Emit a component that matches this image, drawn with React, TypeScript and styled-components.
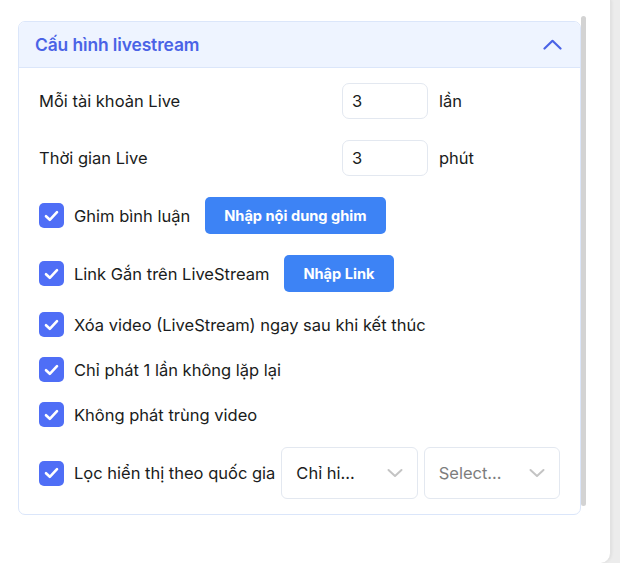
import React from "react";
import styled, { createGlobalStyle } from "styled-components";

const Global = createGlobalStyle`
  html, body { margin: 0; padding: 0; background: #ececec; }
  body { font-family: Inter, "Noto Sans", "Liberation Sans", sans-serif; color: #1a1c20; }
  * { box-sizing: border-box; }
`;

const Panel = styled.div`
  width: 611px;
  height: 563px;
  background: #ffffff;
  border-bottom-right-radius: 10px;
  border-right: 1px solid #e2e2e2;
  box-shadow: 1px 0 3px rgba(0, 0, 0, 0.06);
  display: flex;
  align-items: flex-start;
  padding-left: 18px;
`;

const Column = styled.div`
  padding-top: 21px;
  width: 563px;
`;

const ScrollThumb = styled.div`
  width: 5px;
  height: 490px;
  margin-top: 16px;
  border-radius: 3px;
  background: #d3d3d3;
`;

const Card = styled.section`
  border: 1px solid #dbe6fa;
  border-radius: 7px;
  overflow: hidden;
  background: #fff;
`;

const Header = styled.div`
  height: 46px;
  background: #eef4ff;
  border-bottom: 1px solid #dbe6fa;
  display: flex;
  align-items: center;
  justify-content: space-between;
  padding: 0 18px 0 16px;
`;

const Title = styled.h3`
  margin: 0;
  font-size: 17.4px;
  font-weight: 600;
  color: #4a63e6;
  letter-spacing: -0.1px;
`;

const Body = styled.div`
  padding: 15px 20px 15px 20px;
  display: flex;
  flex-direction: column;
  gap: 20px;
`;

const FieldRow = styled.div`
  display: flex;
  align-items: center;
  height: 36px;
  margin-bottom: 1px;
`;

const FieldLabel = styled.span`
  width: 303px;
  font-size: 16.5px;
`;

const NumInput = styled.input`
  width: 86px;
  height: 36px;
  border: 1px solid #e3e8f0;
  border-radius: 7px;
  padding: 0 9px;
  font-family: inherit;
  font-size: 16.5px;
  color: #1a1c20;
  outline: none;
`;

const Unit = styled.span`
  margin-left: 11px;
  font-size: 16.5px;
`;

const CheckRow = styled.div<{ $spaced?: boolean }>`
  display: flex;
  align-items: center;
  min-height: 25px;
  margin-bottom: ${(p) => (p.$spaced ? "1px" : "0")};
`;

const Box = styled.span`
  width: 25px;
  height: 25px;
  border-radius: 5px;
  background: #4f6ef6;
  display: inline-flex;
  align-items: center;
  justify-content: center;
  flex: none;
`;

const CheckLabel = styled.span`
  margin-left: 10px;
  font-size: 16.5px;
  line-height: 20px;
  white-space: nowrap;
`;

const ActionButton = styled.button`
  margin-left: 15px;
  height: 37px;
  padding: 0 19px;
  border: none;
  border-radius: 5px;
  background: #3d83f5;
  color: #fff;
  font-family: inherit;
  font-size: 14.6px;
  font-weight: 700;
  cursor: pointer;
`;

const Selects = styled.div`
  flex: 1;
  display: flex;
  gap: 6px;
  margin-left: 6px;
`;

const SelectBox = styled.div<{ $placeholder?: boolean }>`
  flex: 1;
  height: 52px;
  border: 1px solid #e3e8f0;
  border-radius: 6px;
  display: flex;
  align-items: center;
  justify-content: space-between;
  padding: 0 14px 0 14px;
  font-size: 16.5px;
  color: ${(p) => (p.$placeholder ? "#7d7d7d" : "#1a1c20")};
`;

const Check = () => (
  <svg width="15" height="12" viewBox="0 0 15 12" fill="none">
    <path d="M2 6.2 L5.8 9.8 L13 2.2" stroke="#fff" strokeWidth="2.6" strokeLinecap="round" strokeLinejoin="round" />
  </svg>
);

const ChevronUp = () => (
  <svg width="19" height="11" viewBox="0 0 19 11" fill="none">
    <path d="M1.5 9.5 L9.5 1.8 L17.5 9.5" stroke="#4a63e6" strokeWidth="2.2" strokeLinecap="round" strokeLinejoin="round" />
  </svg>
);

const ChevronDown = () => (
  <svg width="16" height="10" viewBox="0 0 16 10" fill="none">
    <path d="M1.5 2 L8 8 L14.5 2" stroke="#c4c4c4" strokeWidth="2" strokeLinecap="round" strokeLinejoin="round" />
  </svg>
);

const CheckItem = ({
  label,
  spaced,
  children,
}: {
  label: string;
  spaced?: boolean;
  children?: React.ReactNode;
}) => (
  <CheckRow $spaced={spaced}>
    <Box>
      <Check />
    </Box>
    <CheckLabel>{label}</CheckLabel>
    {children}
  </CheckRow>
);

export default function App() {
  return (
    <>
      <Global />
      <Panel>
        <Column>
          <Card>
            <Header>
              <Title>Cấu hình livestream</Title>
              <ChevronUp />
            </Header>
            <Body>
              <FieldRow>
                <FieldLabel>Mỗi tài khoản Live</FieldLabel>
                <NumInput defaultValue="3" />
                <Unit>lần</Unit>
              </FieldRow>
              <FieldRow>
                <FieldLabel>Thời gian Live</FieldLabel>
                <NumInput defaultValue="3" />
                <Unit>phút</Unit>
              </FieldRow>
              <CheckItem label="Ghim bình luận" spaced>
                <ActionButton>Nhập nội dung ghim</ActionButton>
              </CheckItem>
              <CheckItem label="Link Gắn trên LiveStream">
                <ActionButton>Nhập Link</ActionButton>
              </CheckItem>
              <CheckItem label="Xóa video (LiveStream) ngay sau khi kết thúc" />
              <CheckItem label="Chỉ phát 1 lần không lặp lại" />
              <CheckItem label="Không phát trùng video" />
              <CheckItem label="Lọc hiển thị theo quốc gia">
                <Selects>
                  <SelectBox>
                    <span>Chỉ hi...</span>
                    <ChevronDown />
                  </SelectBox>
                  <SelectBox $placeholder>
                    <span>Select...</span>
                    <ChevronDown />
                  </SelectBox>
                </Selects>
              </CheckItem>
            </Body>
          </Card>
        </Column>
        <ScrollThumb />
      </Panel>
    </>
  );
}
